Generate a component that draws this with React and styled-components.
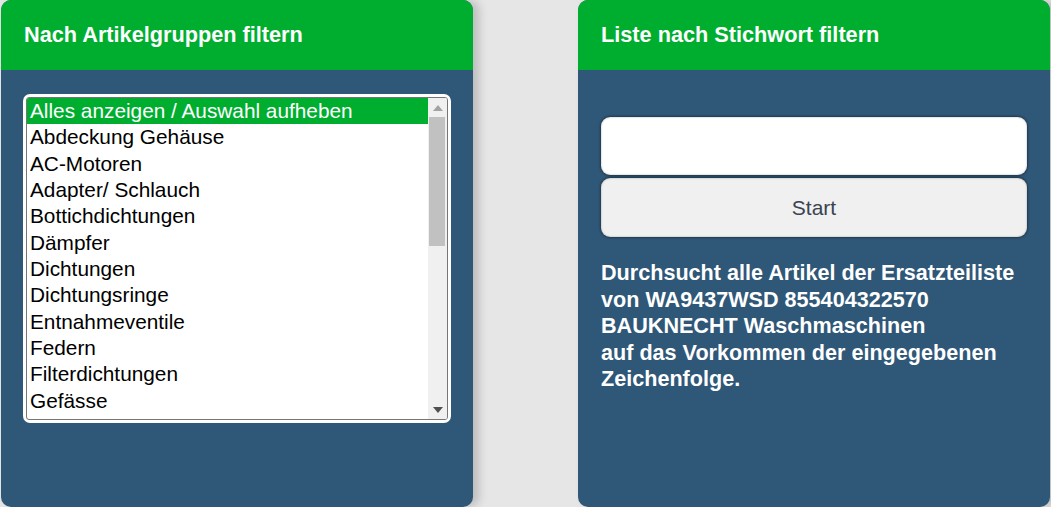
import styled, { createGlobalStyle } from "styled-components";
import { useState } from "react";

const GlobalStyle = createGlobalStyle`
  html, body {
    margin: 0;
    padding: 0;
    background: #e6e6e6;
    font-family: "Liberation Sans", Arial, sans-serif;
    overflow: hidden;
  }
`;

const Page = styled.div`
  display: grid;
  grid-template-columns: 472px 472px;
  column-gap: 105px;
  padding-left: 1px;
  height: 507px;
`;

const Panel = styled.section`
  display: flex;
  flex-direction: column;
  height: 507px;
  background: #2f5777;
  border-radius: 10px;
  overflow: hidden;
  box-shadow: 6px 0 10px rgba(0, 0, 0, 0.18);
`;

const PanelHeader = styled.h2`
  margin: 0;
  height: 70px;
  display: flex;
  align-items: center;
  padding: 0 23px;
  background: #00ae2f;
  color: #fff;
  font-size: 21.7px;
  font-weight: 700;
`;

const PanelBody = styled.div`
  display: flex;
  flex-direction: column;
  padding: ${(p) => p.$top}px 22px 0;
`;

const ListFrame = styled.div`
  display: flex;
  height: 323px;
  border: 2px solid #fff;
  border-radius: 7px;
  background: #fff;
  padding: 1px;
`;

const ListInner = styled.div`
  display: flex;
  flex: 1;
  border: 1px solid #767676;
  border-radius: 3px;
  overflow: hidden;
`;

const Options = styled.ul`
  flex: 1;
  margin: 0;
  padding: 0;
  list-style: none;
  overflow: hidden;
`;

const Option = styled.li`
  height: 26.35px;
  line-height: 26.35px;
  padding-left: 3px;
  font-size: 20.8px;
  color: ${(p) => (p.$selected ? "#fff" : "#000")};
  background: ${(p) => (p.$selected ? "#00ae2f" : "transparent")};
  white-space: nowrap;
  cursor: default;
`;

const Scrollbar = styled.div`
  display: flex;
  flex-direction: column;
  width: 19px;
  background: #f0f0f0;
`;

const ScrollArrow = styled.div`
  height: 19px;
  display: flex;
  align-items: center;
  justify-content: center;
`;

const Track = styled.div`
  flex: 1;
  padding: 0 2px 0 1px;
`;

const Thumb = styled.div`
  height: 129px;
  background: #c1c1c1;
`;

const SearchInput = styled.input`
  height: 58px;
  box-sizing: border-box;
  margin: 0 1px;
  border: none;
  border-radius: 9px;
  background: #fff;
  font-size: 20.8px;
  font-family: inherit;
  padding: 0 12px;
  box-shadow: 0 0 3px rgba(0, 0, 0, 0.7), inset 0 0 2px rgba(0, 0, 0, 0.35);
  outline: none;
`;

const StartButton = styled.button`
  margin: 3px 1px 0;
  height: 59px;
  border: none;
  border-radius: 9px;
  background: #f0f0f0;
  color: #3a4350;
  font-size: 21px;
  font-family: inherit;
  box-shadow: 0 0 3px rgba(0, 0, 0, 0.7), inset 0 0 2px rgba(0, 0, 0, 0.35);
`;

const Info = styled.p`
  margin: 23px 0 0 1px;
  color: #fff;
  font-size: 21.6px;
  font-weight: 700;
  line-height: 26.5px;
`;

const groups = [
  "Alles anzeigen / Auswahl aufheben",
  "Abdeckung Gehäuse",
  "AC-Motoren",
  "Adapter/ Schlauch",
  "Bottichdichtungen",
  "Dämpfer",
  "Dichtungen",
  "Dichtungsringe",
  "Entnahmeventile",
  "Federn",
  "Filterdichtungen",
  "Gefässe",
];

const Arrow = ({ up, color }) => (
  <svg width="10" height="6" viewBox="0 0 10 6">
    <path d={up ? "M0 6 L5 0 L10 6 Z" : "M0 0 L10 0 L5 6 Z"} fill={color} />
  </svg>
);

const App = () => {
  const [selected, setSelected] = useState(0);
  const [term, setTerm] = useState("");

  return (
    <>
      <GlobalStyle />
      <Page>
        <Panel>
          <PanelHeader>Nach Artikelgruppen filtern</PanelHeader>
          <PanelBody $top={24}>
            <ListFrame>
              <ListInner>
                <Options>
                  {groups.map((g, i) => (
                    <Option
                      key={g}
                      $selected={i === selected}
                      onClick={() => setSelected(i)}
                    >
                      {g}
                    </Option>
                  ))}
                </Options>
                <Scrollbar>
                  <ScrollArrow>
                    <Arrow up color="#a3a3a3" />
                  </ScrollArrow>
                  <Track>
                    <Thumb />
                  </Track>
                  <ScrollArrow>
                    <Arrow color="#505050" />
                  </ScrollArrow>
                </Scrollbar>
              </ListInner>
            </ListFrame>
          </PanelBody>
        </Panel>

        <Panel>
          <PanelHeader>Liste nach Stichwort filtern</PanelHeader>
          <PanelBody $top={47}>
            <SearchInput
              type="text"
              value={term}
              onChange={(e) => setTerm(e.target.value)}
            />
            <StartButton type="button">Start</StartButton>
            <Info>
              Durchsucht alle Artikel der Ersatzteiliste
              <br />
              von WA9437WSD 855404322570
              <br />
              BAUKNECHT Waschmaschinen
              <br />
              auf das Vorkommen der eingegebenen
              <br />
              Zeichenfolge.
            </Info>
          </PanelBody>
        </Panel>
      </Page>
    </>
  );
};

export default App;
